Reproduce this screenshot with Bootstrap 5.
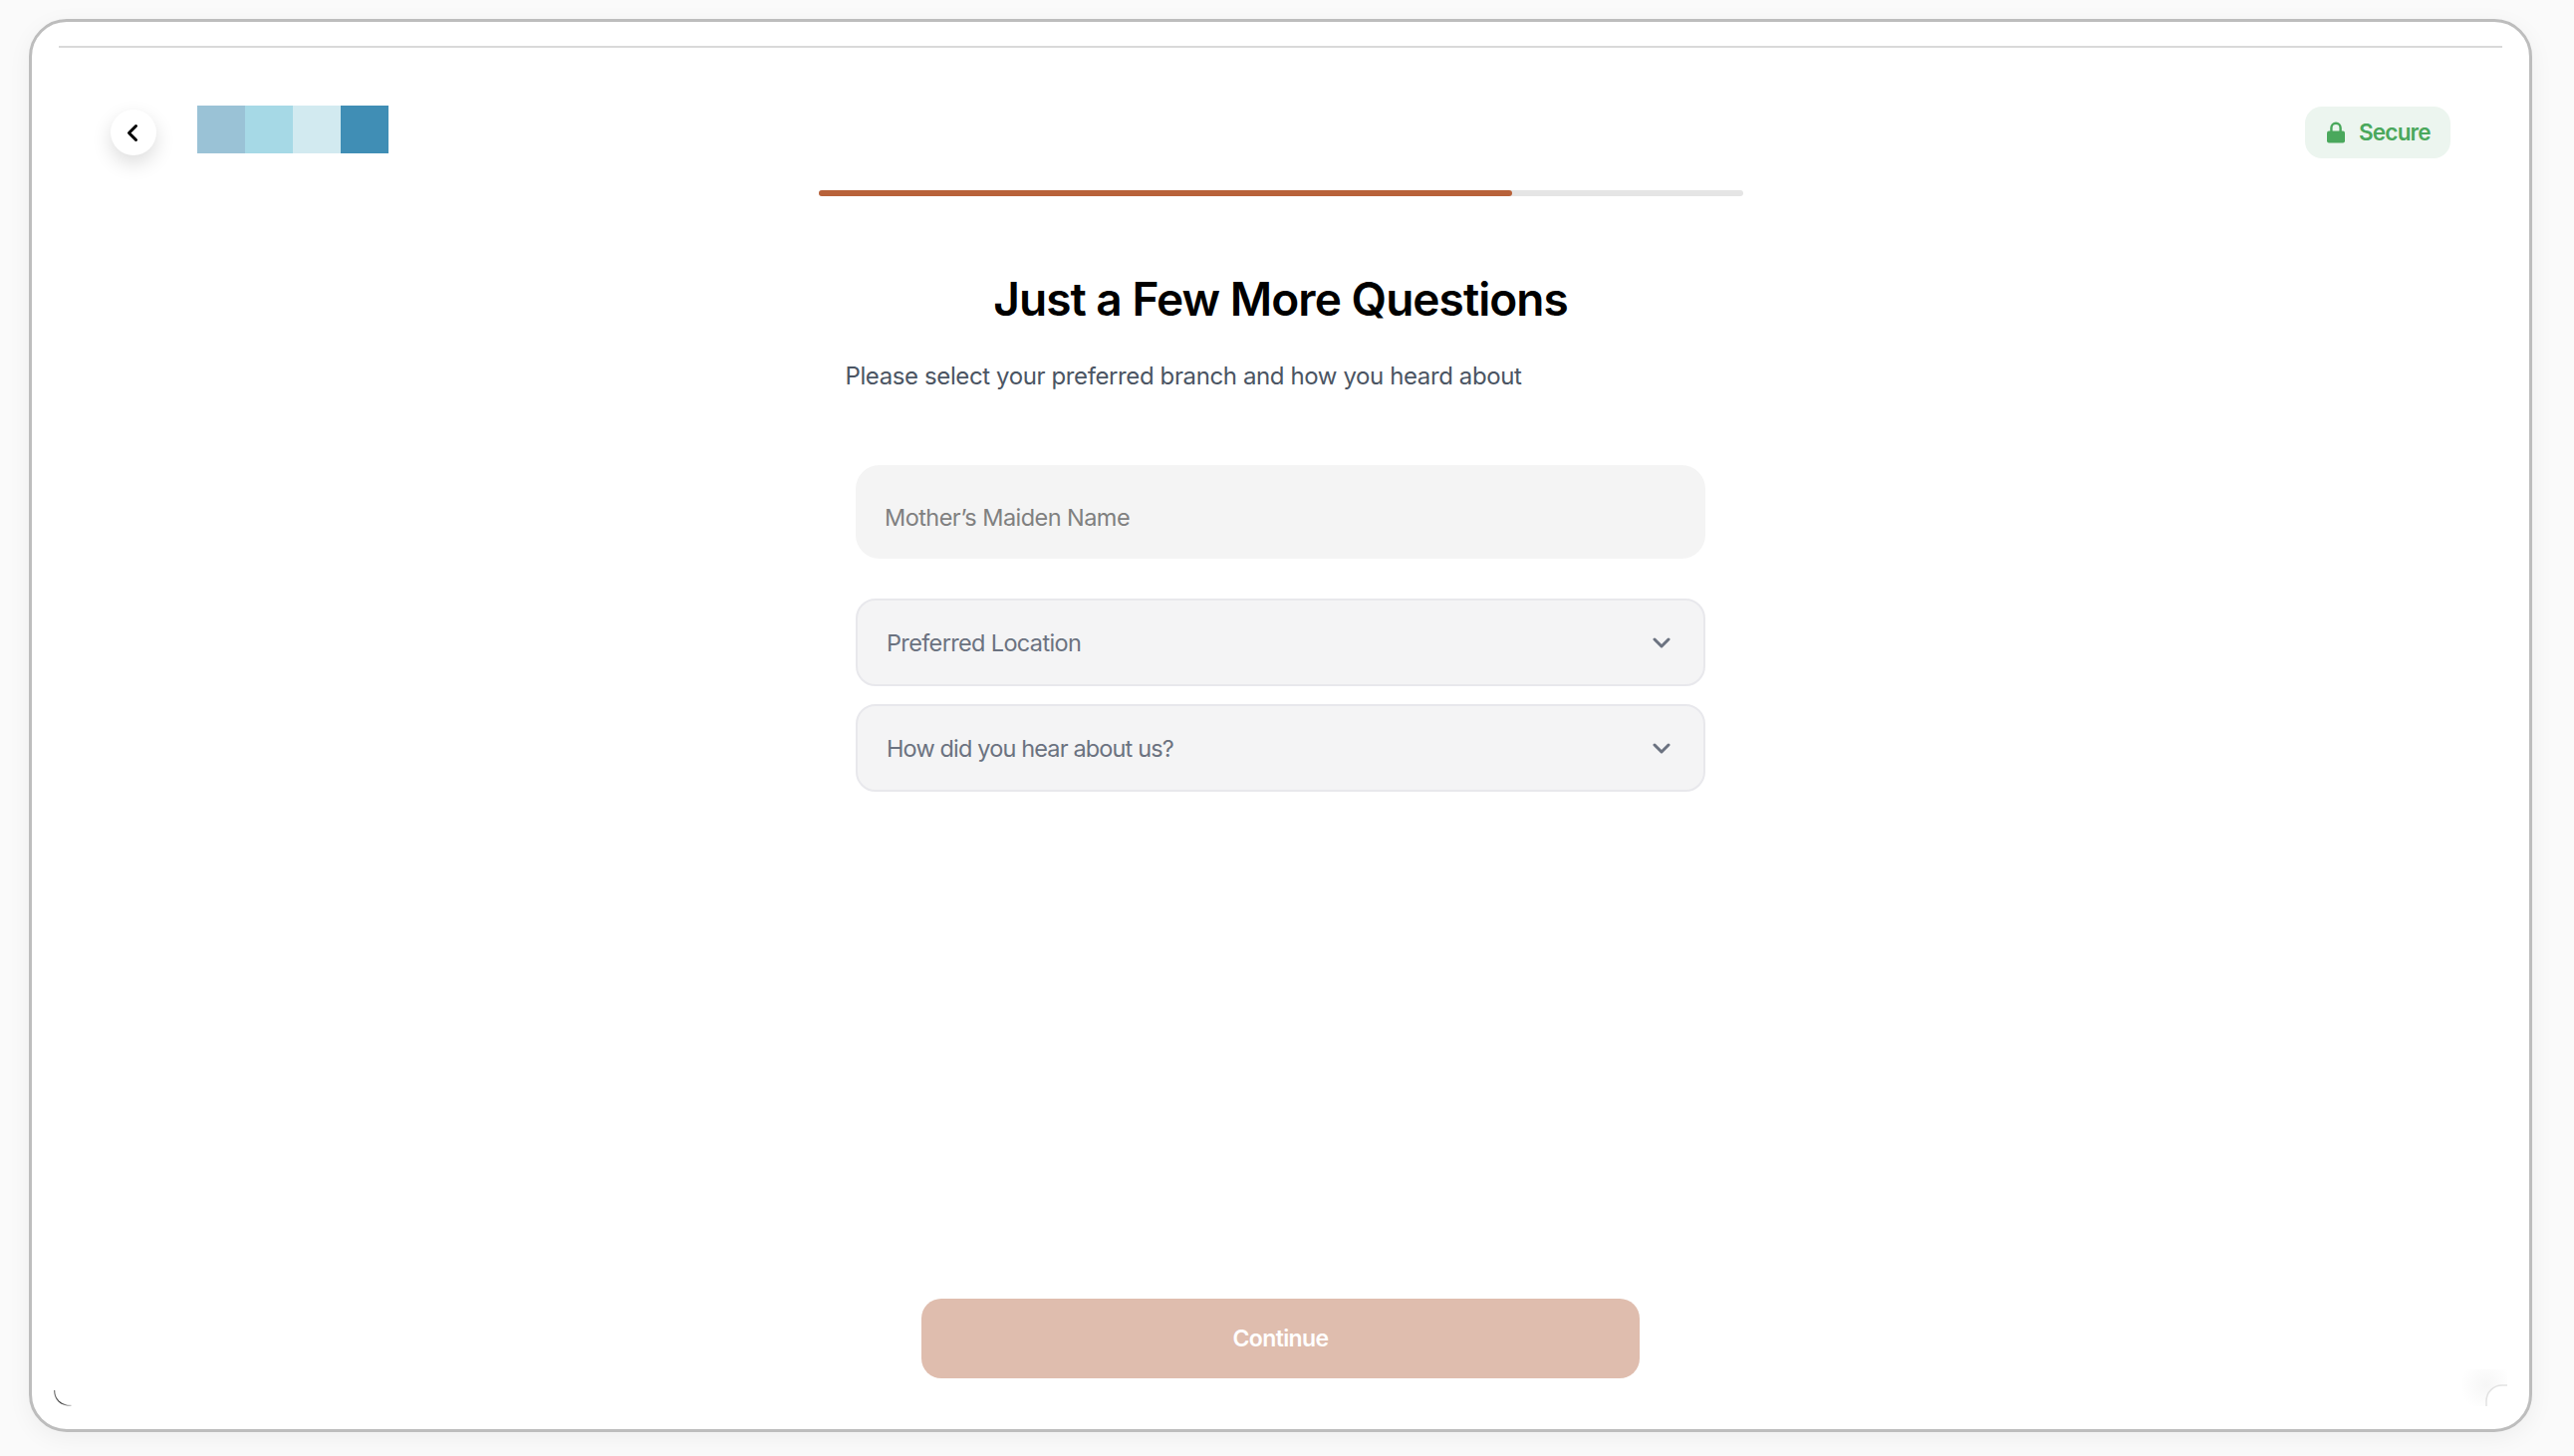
<!DOCTYPE html>
<html lang="en">
<head>
<meta charset="utf-8">
<title>Just a Few More Questions</title>
<link href="https://cdn.jsdelivr.net/npm/bootstrap@5.3.0/dist/css/bootstrap.min.css" rel="stylesheet">
<style>
html,body{height:100%;}
body{background:#fafafa;font-family:"Inter","Liberation Sans",sans-serif;overflow:hidden;}
.device{margin:19px 0 0 29px;width:2513px;height:1419px;background:#fff;border:3px solid #bdbdbd;border-radius:38px;box-shadow:0 6px 24px rgba(0,0,0,.05);}
.hair{height:2px;background:#d9d9d9;margin:24px 27px 0;flex:none;}
.topbar{margin-top:58px;padding:0 79px 0 79px;flex:none;}
.back{width:46px;height:46px;margin-top:4px;background:#fff;box-shadow:0 8px 20px rgba(0,0,0,.14);border:0;padding:0;}
.swatches{margin-left:41px;}
.swatch{width:48px;height:48px;}
.s1{background:#9ac2d6;}.s2{background:#a6d9e6;}.s3{background:#d2eaf0;}.s4{background:#408eb5;}
.secure{width:146px;height:52px;margin-top:1px;padding:0 0 0 22px;gap:14px;background:#ecf5ef;color:#4aa85c;border-radius:17px;font-size:22.5px;font-weight:600;letter-spacing:-.8px;}
.track{width:928px;height:6px;margin-top:32px;background:#e5e5e5;border-radius:3px;flex:none;}
.fill{width:75%;height:100%;background:#b8623a;border-radius:3px;}
.heading{font-size:46px;font-weight:600;letter-spacing:-.96px;color:#000;line-height:56px;margin:75px 0 0;}
.sub{width:928px;padding-left:27px;margin:34px 0 0;font-size:24px;letter-spacing:-.39px;line-height:32px;color:#4b5563;}
.fields{width:853px;margin-top:73px;}
.namebox{height:94px;}
.nameinput{height:94px;background:#f4f4f4;border:0;border-radius:24px;}
.namelabel{left:29px;top:38px;font-size:23.5px;letter-spacing:-.55px;line-height:30px;color:#808080;}
.pick{height:88px;width:100%;background:#f4f4f5;border:2px solid #e8e8ec;border-radius:20px;padding:1px 33px 0 29px;font-size:23.5px;letter-spacing:-.65px;color:#6b7280;}
.pick:hover{background:#f4f4f5;border-color:#e8e8ec;color:#6b7280;}
.pick1{margin-top:40px;}
.pick2{margin-top:18px;letter-spacing:-.85px;}
.go{width:721px;height:80px;margin-bottom:51px;background:#dfbdae;border:0;border-radius:20px;color:#fff;font-size:23px;font-weight:600;letter-spacing:-.6px;}
.go:hover{background:#dfbdae;color:#fff;}
.cornerl{left:22px;bottom:23px;}
.cornerr{right:22px;bottom:23px;}
</style>
</head>
<body>
<main class="device d-flex flex-column align-items-center position-relative">
  <div class="hair align-self-stretch"></div>
  <header class="topbar d-flex align-items-start justify-content-between align-self-stretch">
    <div class="d-flex align-items-start">
      <button class="back btn rounded-circle d-flex align-items-center justify-content-center" type="button" aria-label="Back">
        <svg width="14" height="19" viewBox="0 0 14 19" fill="none"><path d="M9.5 2.5 2.5 9.5l7 7" stroke="#000" stroke-width="3" stroke-linecap="round" stroke-linejoin="round"/></svg>
      </button>
      <div class="swatches d-flex" aria-label="Logo">
        <div class="swatch s1"></div><div class="swatch s2"></div><div class="swatch s3"></div><div class="swatch s4"></div>
      </div>
    </div>
    <div class="secure d-flex align-items-center">
      <svg width="18" height="22" viewBox="0 0 18 22" fill="none"><path d="M4.4 10V6.4a4.6 4.6 0 0 1 9.2 0V10" stroke="#4aa85c" stroke-width="2.4"/><rect x="0" y="9.5" width="18" height="12" rx="2" fill="#4aa85c"/></svg>
      <span>Secure</span>
    </div>
  </header>
  <div class="track"><div class="fill"></div></div>
  <h1 class="heading">Just a Few More Questions</h1>
  <p class="sub">Please select your preferred branch and how you heard about</p>
  <form class="fields">
    <div class="namebox position-relative">
      <input class="nameinput form-control" id="maiden" type="text">
      <label class="namelabel position-absolute" for="maiden">Mother’s Maiden Name</label>
    </div>
    <button class="pick pick1 btn d-flex align-items-center justify-content-between" type="button">
      <span>Preferred Location</span>
      <svg width="18" height="11" viewBox="0 0 18 11" fill="none"><path d="m2 2 7 7 7-7" stroke="#6b7280" stroke-width="3" stroke-linecap="round" stroke-linejoin="round"/></svg>
    </button>
    <button class="pick pick2 btn d-flex align-items-center justify-content-between" type="button">
      <span>How did you hear about us?</span>
      <svg width="18" height="11" viewBox="0 0 18 11" fill="none"><path d="m2 2 7 7 7-7" stroke="#6b7280" stroke-width="3" stroke-linecap="round" stroke-linejoin="round"/></svg>
    </button>
  </form>
  <button class="go btn mt-auto" type="button">Continue</button>
  <svg class="cornerl position-absolute" width="18" height="16" viewBox="0 0 18 16" fill="none">
    <defs><linearGradient id="arcfade" x1="0" y1="0" x2="1" y2="0"><stop offset="0" stop-color="#777"/><stop offset=".35" stop-color="#333"/><stop offset="1" stop-color="#ccc"/></linearGradient></defs>
    <path d="M.6 0c0 9 6 15.4 17 15.4" stroke="url(#arcfade)" stroke-width="1.2"/>
  </svg>
  <svg class="cornerr position-absolute" width="45" height="37" viewBox="0 0 45 37" fill="none">
    <defs><radialGradient id="cornerglow" cx="24" cy="16" r="26" gradientUnits="userSpaceOnUse"><stop offset="0" stop-color="#f6f6f6"/><stop offset="1" stop-color="#fff"/></radialGradient></defs>
    <rect width="45" height="37" fill="url(#cornerglow)"/>
    <path d="M24 37V32C24 23 31 16 40 16h5V37Z" fill="#fff"/>
    <path d="M24 37V32C24 23 31 16 40 16h5" stroke="#e2e2e2" stroke-width="1.5"/>
  </svg>
</main>
<script src="https://cdn.jsdelivr.net/npm/bootstrap@5.3.0/dist/js/bootstrap.bundle.min.js"></script>
</body>
</html>
